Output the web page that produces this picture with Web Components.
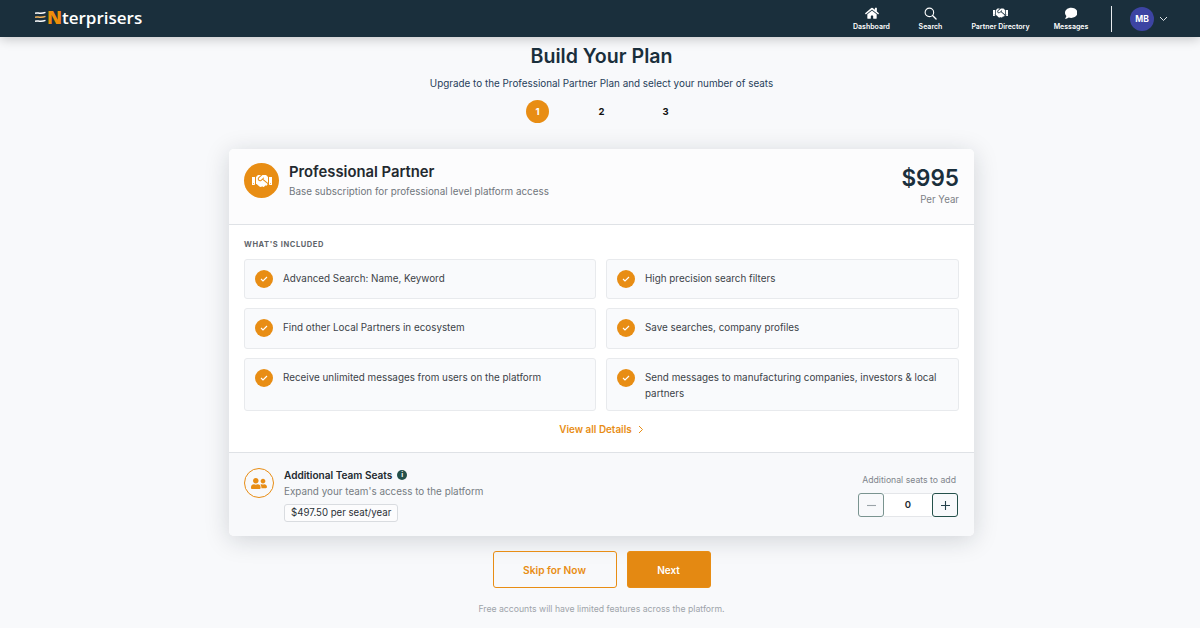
<!DOCTYPE html>
<html lang="en">
<head>
<meta charset="utf-8">
<title>Build Your Plan</title>
<style>
  html, body { margin: 0; height: 100%; overflow: hidden; }
  body { background: #f8f9fb; font-family: Inter, "Liberation Sans", sans-serif; color: #1a2f3c; }
</style>
</head>
<body>
<app-nav>
  <nav-item label="Dashboard" width="59"><svg viewBox="0 0 576 512" width="14" height="12.5"><path fill="#fff" d="M280.37 148.26L96 300.11V464a16 16 0 0 0 16 16l112.06-.29a16 16 0 0 0 15.92-16V368a16 16 0 0 1 16-16h64a16 16 0 0 1 16 16v95.64a16 16 0 0 0 16 16.05L464 480a16 16 0 0 0 16-16V300L295.67 148.26a12.19 12.19 0 0 0-15.3 0zM571.6 251.47L488 182.56V44.05a12 12 0 0 0-12-12h-56a12 12 0 0 0-12 12v72.61L318.47 43a48 48 0 0 0-61 0L4.34 251.47a12 12 0 0 0-1.6 16.9l25.5 31A12 12 0 0 0 45.15 301l235.22-193.74a12.19 12.19 0 0 1 15.3 0L530.9 301a12 12 0 0 0 16.9-1.6l25.5-31a12 12 0 0 0-1.7-16.93z"/></svg></nav-item>
  <nav-item label="Search" width="59"><svg viewBox="0 0 14 14" width="13" height="13"><circle cx="5.8" cy="5.8" r="4.6" fill="none" stroke="#fff" stroke-width="1.2"/><path d="M9.2 9.2L13 13" stroke="#fff" stroke-width="1.4" stroke-linecap="round"/></svg></nav-item>
  <nav-item label="Partner Directory" width="81"><svg viewBox="0 0 640 512" width="15" height="12"><path fill="#fff" d="M434.7 64h-85.9c-8 0-15.7 3-21.6 8.4l-98.3 90c-.1.1-.2.3-.3.4-16.6 15.6-16.3 40.5-2.1 56 12.7 13.9 39.4 17.6 56.1 2.7.1-.1.3-.1.4-.2l79.9-73.2c6.5-5.9 16.7-5.5 22.6 1 6 6.5 5.5 16.6-1 22.6l-26.1 23.9L504 313.8c2.9 2.4 5.5 5 7.9 7.7V128l-54.6-54.6c-5.9-6-14.1-9.4-22.6-9.4zM544 128.2v223.9c0 17.7 14.3 32 32 32h64V128.2h-96zm48 223.9c-8.8 0-16-7.2-16-16s7.2-16 16-16 16 7.2 16 16-7.2 16-16 16zM0 384h64c17.7 0 32-14.3 32-32V128.2H0V384zm48-63.9c8.8 0 16 7.2 16 16s-7.2 16-16 16-16-7.2-16-16c0-8.9 7.2-16 16-16zm435.9 18.6L334.6 217.5l-30 27.5c-29.7 27.1-75.2 24.5-101.7-4.4-26.9-29.4-24.8-74.9 4.4-101.7L289.1 64h-83.8c-8.5 0-16.6 3.4-22.6 9.4L128 128v223.9h18.3l90.5 81.9c27.4 22.3 67.7 18.1 90-9.3l.2-.2 17.9 15.5c15.9 13 39.4 10.5 52.3-5.4l31.4-38.6 5.4 4.4c13.7 11.1 33.9 9.1 45-4.7l9.5-11.7c11.2-13.8 9.1-33.9-4.6-45.1z"/></svg></nav-item>
  <nav-item label="Messages" width="60"><svg viewBox="0 0 512 512" width="12.5" height="12.5"><path fill="#fff" d="M256 32C114.6 32 0 125.1 0 240c0 49.6 21.4 95 57 130.7C44.5 421.1 2.7 466 2.2 466.5c-2.2 2.3-2.8 5.7-1.5 8.7S4.8 480 8 480c66.3 0 116-31.8 140.6-51.4 32.7 12.3 69 19.4 107.4 19.4 141.4 0 256-93.1 256-208S397.4 32 256 32z"/></svg></nav-item>
</app-nav>

<plan-page>
  <plan-card>
    <feature-item>Advanced Search: Name, Keyword</feature-item>
    <feature-item>High precision search filters</feature-item>
    <feature-item>Find other Local Partners in ecosystem</feature-item>
    <feature-item>Save searches, company profiles</feature-item>
    <feature-item>Receive unlimited messages from users on the platform</feature-item>
    <feature-item>Send messages to manufacturing companies, investors &amp; local partners</feature-item>
  </plan-card>
</plan-page>

<script>
const HANDSHAKE = 'M434.7 64h-85.9c-8 0-15.7 3-21.6 8.4l-98.3 90c-.1.1-.2.3-.3.4-16.6 15.6-16.3 40.5-2.1 56 12.7 13.9 39.4 17.6 56.1 2.7.1-.1.3-.1.4-.2l79.9-73.2c6.5-5.9 16.7-5.5 22.6 1 6 6.5 5.5 16.6-1 22.6l-26.1 23.9L504 313.8c2.9 2.4 5.5 5 7.9 7.7V128l-54.6-54.6c-5.9-6-14.1-9.4-22.6-9.4zM544 128.2v223.9c0 17.7 14.3 32 32 32h64V128.2h-96zm48 223.9c-8.8 0-16-7.2-16-16s7.2-16 16-16 16 7.2 16 16-7.2 16-16 16zM0 384h64c17.7 0 32-14.3 32-32V128.2H0V384zm48-63.9c8.8 0 16 7.2 16 16s-7.2 16-16 16-16-7.2-16-16c0-8.9 7.2-16 16-16zm435.9 18.6L334.6 217.5l-30 27.5c-29.7 27.1-75.2 24.5-101.7-4.4-26.9-29.4-24.8-74.9 4.4-101.7L289.1 64h-83.8c-8.5 0-16.6 3.4-22.6 9.4L128 128v223.9h18.3l90.5 81.9c27.4 22.3 67.7 18.1 90-9.3l.2-.2 17.9 15.5c15.9 13 39.4 10.5 52.3-5.4l31.4-38.6 5.4 4.4c13.7 11.1 33.9 9.1 45-4.7l9.5-11.7c11.2-13.8 9.1-33.9-4.6-45.1z';
const USERS = 'M192 256c61.9 0 112-50.1 112-112S253.9 32 192 32 80 82.1 80 144s50.1 112 112 112zm76.8 32h-8.3c-20.8 10-43.9 16-68.5 16s-47.6-6-68.5-16h-8.3C51.6 288 0 339.6 0 403.2V432c0 26.5 21.5 48 48 48h288c26.5 0 48-21.5 48-48v-28.8c0-63.6-51.6-115.2-115.2-115.2zM480 256c53 0 96-43 96-96s-43-96-96-96-96 43-96 96 43 96 96 96zm48 32h-3.8c-13.9 4.8-28.6 8-44.2 8s-30.3-3.2-44.2-8H432c-20.4 0-39.2 5.9-55.7 15.4 24.4 26.3 39.7 61.2 39.7 99.8v38.4c0 2.2-.5 4.3-.6 6.4H592c26.5 0 48-21.5 48-48 0-61.9-50.1-112-112-112z';

class AppNav extends HTMLElement {
  connectedCallback() {
    this.attachShadow({ mode: 'open' }).innerHTML = `
      <style>
        :host { display: flex; align-items: center; position: relative; z-index: 2; height: 37px; background: #1a2f3c; box-shadow: 0 2px 12px rgba(0,0,0,.22); padding: 0 32px 0 35px; }
        .logo { display: flex; align-items: center; gap: 1px; padding-bottom: 4px; font: 600 17px/1 "Open Sans", sans-serif; color: #fff; }
        .logo b { color: #ee8d0a; font-weight: 800; font-size: 18px; }
        .links { display: flex; align-self: flex-start; margin-left: auto; }
        .rule { width: 1px; height: 26px; background: #e8ecef; margin: 0 18px 0 10px; }
        .avatar { width: 24px; height: 24px; border-radius: 50%; background: #3d44a3; color: #fff; font-size: 8.5px; font-weight: 700; display: flex; align-items: center; justify-content: center; }
        .chev { margin-left: 5px; }
      </style>
      <div class="logo">
        <svg width="11" height="12" viewBox="0 0 11 12" fill="none" stroke="#fff" stroke-width="1.5"><path d="M0 2.4C2.5.6 4 3.8 10.5 1.4"/><path d="M0 6.4C2.5 4.6 4 7.8 10.5 5.4" stroke="#f2b35a"/><path d="M0 10.4C2.5 8.6 4 11.8 10.5 9.4"/></svg>
        <span><b>N</b>terprisers</span>
      </div>
      <div class="links"><slot></slot></div>
      <div class="rule"></div>
      <div class="avatar">MB</div>
      <svg class="chev" width="9" height="6" viewBox="0 0 9 6" fill="none" stroke="#dfe4e8" stroke-width="1"><path d="M1 1l3.5 3.5L8 1"/></svg>`;
  }
}

class NavItem extends HTMLElement {
  connectedCallback() {
    this.attachShadow({ mode: 'open' }).innerHTML = `
      <style>
        :host { display: flex; flex-direction: column; align-items: center; width: ${this.getAttribute('width')}px; color: #fff; }
        .icon { height: 16px; display: flex; align-items: center; justify-content: center; margin-top: 5px; }
        .label { font-size: 7px; font-weight: 600; line-height: 10px; margin-top: 1px; white-space: nowrap; }
      </style>
      <div class="icon"><slot></slot></div>
      <div class="label">${this.getAttribute('label')}</div>`;
  }
}

class PlanPage extends HTMLElement {
  connectedCallback() {
    this.attachShadow({ mode: 'open' }).innerHTML = `
      <style>
        :host { display: flex; flex-direction: column; align-items: center; padding-left: 3px; }
        h1 { margin: 7px 0 0; font-size: 19.6px; line-height: 24px; font-weight: 600; color: #1a2f3c; }
        .sub { margin: 8px 0 0; font-size: 9.9px; line-height: 14px; color: #27405a; }
        .steps { display: flex; gap: 41px; margin-top: 10px; }
        .steps span { width: 23px; height: 23px; border-radius: 50%; display: flex; align-items: center; justify-content: center; font-size: 9.5px; font-weight: 700; color: #111; }
        .steps .on { background: #e88d14; color: #fff; }
        .wrap { margin-top: 26px; }
        .actions { display: flex; gap: 10px; margin-top: 15px; }
        button { height: 37px; border-radius: 3px; font: 600 10px Inter, sans-serif; border: 1px solid #e88d14; cursor: pointer; }
        .skip { width: 124px; background: transparent; color: #e88d14; font-size: 10.2px; }
        .next { width: 84px; background: #e48912; color: #fff; }
        .note { margin: 15px 0 0; font-size: 8.7px; line-height: 12px; color: #9ea4aa; }
      </style>
      <h1>Build Your Plan</h1>
      <p class="sub">Upgrade to the Professional Partner Plan and select your number of seats</p>
      <div class="steps"><span class="on">1</span><span>2</span><span>3</span></div>
      <div class="wrap"><slot></slot></div>
      <div class="actions"><button class="skip">Skip for Now</button><button class="next">Next</button></div>
      <p class="note">Free accounts will have limited features across the platform.</p>`;
  }
}

class PlanCard extends HTMLElement {
  connectedCallback() {
    this.attachShadow({ mode: 'open' }).innerHTML = `
      <style>
        :host { display: block; width: 745px; height: 387px; background: #fff; border-radius: 5px; box-shadow: 0 4px 24px rgba(20,30,40,.17); overflow: hidden; }
        .head { display: flex; height: 76px; box-sizing: border-box; padding: 14px 15px 0; gap: 10px; background: #fcfcfd; border-bottom: 1px solid #dfe2e6; }
        .badge { width: 35px; height: 35px; border-radius: 50%; background: #e88d14; display: flex; align-items: center; justify-content: center; flex: none; }
        .name { font-size: 14.8px; font-weight: 600; line-height: 18px; color: #23292f; }
        .desc { font-size: 9.85px; line-height: 13px; color: #70767c; margin-top: 4px; }
        .price { margin-left: auto; text-align: right; padding-top: 1px; }
        .amount { font-size: 22.5px; font-weight: 600; line-height: 28px; color: #1a2f3c; }
        .per { font-size: 9.7px; line-height: 12px; color: #7c8187; margin-top: 2px; }
        .body { height: 228px; box-sizing: border-box; padding: 15px 15px 0 15px; border-bottom: 1px solid #dfe2e6; }
        .eyebrow { font-size: 7.5px; font-weight: 700; letter-spacing: .6px; line-height: 10px; color: #5f656b; }
        .grid { display: grid; grid-template-columns: 352px 353px; grid-template-rows: 40px 40.5px 53px; gap: 9px 10px; margin-top: 9px; }
        .more { display: flex; align-items: center; justify-content: center; gap: 6px; margin-top: 12px; font-size: 9.9px; font-weight: 600; color: #e88d14; line-height: 13px; }
        .seats { display: flex; height: 83px; box-sizing: border-box; padding: 15px 16px 0 15px; gap: 10px; background: #f8f9fb; }
        .ring { width: 30px; height: 30px; box-sizing: border-box; border: 1px solid #e88d14; border-radius: 50%; display: flex; align-items: center; justify-content: center; flex: none; }
        .info { flex: 1; }
        .title { display: flex; align-items: center; gap: 5px; margin-top: 1px; font-size: 10.05px; font-weight: 600; line-height: 12px; color: #23292f; }
        .dot { width: 10px; height: 10px; border-radius: 50%; background: #24504a; color: #fff; font-size: 7px; font-weight: 700; line-height: 10px; text-align: center; }
        .hint { font-size: 9.9px; line-height: 13px; color: #767c82; margin-top: 4px; }
        .tag { display: inline-block; margin-top: 6px; height: 18px; box-sizing: border-box; padding: 0 6px; border: 1px solid #d9dce0; border-radius: 3px; background: #fcfcfd; font-size: 9.65px; line-height: 16px; color: #2b3137; }
      </style>
      <div class="head">
        <div class="badge"><svg viewBox="0 0 640 512" width="20" height="16"><path fill="#fff" d="${HANDSHAKE}"/></svg></div>
        <div><div class="name">Professional Partner</div><div class="desc">Base subscription for professional level platform access</div></div>
        <div class="price"><div class="amount">$995</div><div class="per">Per Year</div></div>
      </div>
      <div class="body">
        <div class="eyebrow">WHAT'S INCLUDED</div>
        <div class="grid"><slot></slot></div>
        <div class="more">View all Details <svg width="6" height="9" viewBox="0 0 6 9" fill="none" stroke="#e88d14" stroke-width="1"><path d="M1 1l3.5 3.5L1 8"/></svg></div>
      </div>
      <div class="seats">
        <div class="ring"><svg viewBox="0 0 640 512" width="16" height="13"><path fill="#e88d14" d="${USERS}"/></svg></div>
        <div class="info">
          <div class="title">Additional Team Seats <span class="dot">i</span></div>
          <div class="hint">Expand your team's access to the platform</div>
          <div class="tag">$497.50 per seat/year</div>
        </div>
        <seat-stepper></seat-stepper>
      </div>`;
  }
}

class FeatureItem extends HTMLElement {
  connectedCallback() {
    this.attachShadow({ mode: 'open' }).innerHTML = `
      <style>
        :host { display: flex; gap: 10px; box-sizing: border-box; padding: 10px 10px 0 10px; background: #f9fafc; border: 1px solid #e8eaed; border-radius: 3px; }
        .check { width: 18px; height: 18px; border-radius: 50%; background: #e88d14; display: flex; align-items: center; justify-content: center; flex: none; }
        .text { font-size: 9.85px; line-height: 16px; color: #3c4248; }
      </style>
      <div class="check"><svg width="8" height="6" viewBox="0 0 8 6" fill="none" stroke="#fff" stroke-width="1.1"><path d="M1 3l2 2 4-4"/></svg></div>
      <div class="text"><slot></slot></div>`;
  }
}

class SeatStepper extends HTMLElement {
  connectedCallback() {
    this.attachShadow({ mode: 'open' }).innerHTML = `
      <style>
        :host { display: flex; flex-direction: column; align-items: flex-end; padding-top: 6px; }
        .label { font-size: 8.7px; line-height: 12px; color: #7f858b; padding-right: 2px; }
        .ctl { display: flex; width: 100px; height: 24px; margin-top: 7px; }
        .btn { width: 26px; height: 24px; box-sizing: border-box; border: 1px solid #24504a; border-radius: 3px; display: flex; align-items: center; justify-content: center; background: #f8f9fb; }
        .minus { border-color: #7a9490; }
        .val { flex: 1; box-sizing: border-box; border-top: 1px solid #e4e6e9; border-bottom: 1px solid #e4e6e9; background: #fff; text-align: center; font-size: 9.5px; font-weight: 600; line-height: 22px; color: #23292f; }
      </style>
      <div class="label">Additional seats to add</div>
      <div class="ctl">
        <div class="btn minus"><svg width="9" height="9" viewBox="0 0 9 9"><path d="M0 4.5h9" stroke="#9aa3a8" stroke-width="1.1"/></svg></div>
        <div class="val">0</div>
        <div class="btn"><svg width="9" height="9" viewBox="0 0 9 9"><path d="M0 4.5h9M4.5 0v9" stroke="#24404a" stroke-width="1.1"/></svg></div>
      </div>`;
  }
}

customElements.define('app-nav', AppNav);
customElements.define('nav-item', NavItem);
customElements.define('plan-page', PlanPage);
customElements.define('plan-card', PlanCard);
customElements.define('feature-item', FeatureItem);
customElements.define('seat-stepper', SeatStepper);
</script>
</body>
</html>
